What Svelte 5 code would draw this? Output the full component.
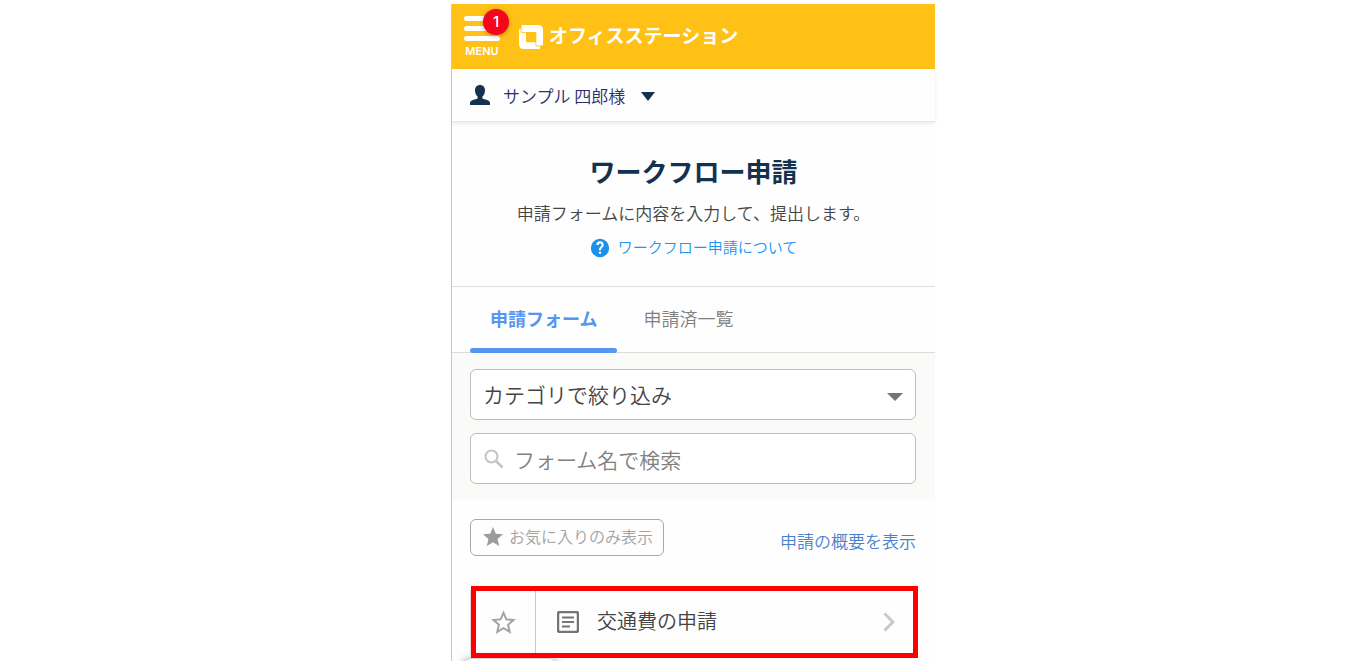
<script>
	let category = $state('');
	let keyword = $state('');
	let favoritesOnly = $state(false);
	let activeTab = $state('forms');

	const tabs = [
		{ id: 'forms', label: '申請フォーム' },
		{ id: 'applied', label: '申請済一覧' }
	];
	const forms = [{ id: 1, name: '交通費の申請' }];
</script>

<div class="page">
	<div class="panel">
		<header class="header">
			<button class="menu" type="button">
				<span class="bar"></span>
				<span class="bar"></span>
				<span class="bar"></span>
				<span class="menu-label">MENU</span>
				<span class="badge">1</span>
			</button>
			<a class="logo" href="#top">
				<svg width="26" height="26" viewBox="0 0 26 26" fill="#fff">
					<path d="M3.500 2Q3.500 1 4.500 1H20Q25 1 25 6V20.500Q25 21.500 24 21.500H18.300V8H3.500Z" />
					<path d="M1 6Q1 5 2 5H2.700V8.800H8V18.300H17.500V22.300H22V24Q22 25 21 25H6Q1 25 1 20Z" />
				</svg>
				<span>オフィスステーション</span>
			</a>
		</header>

		<div class="account">
			<button class="user" type="button">
				<svg width="20" height="20" viewBox="0 0 20 20" fill="#12324f">
					<path d="M10 0C6.900 0 5 2.100 5 5.200C5 8 6.100 10.300 7.600 11.500V13.300C6.800 14.600 0 14.700 0 18V20H20V18C20 14.700 13.200 14.600 12.400 13.300V11.500C13.900 10.300 15 8 15 5.200C15 2.100 13.100 0 10 0Z" />
				</svg>
				<span class="user-name">サンプル 四郎様</span>
				<svg class="user-caret" width="14" height="9" viewBox="0 0 14 9" fill="#12324f"><path d="M0 0H14L7 9Z" /></svg>
			</button>
		</div>

		<section class="intro">
			<h1>ワークフロー申請</h1>
			<p>申請フォームに内容を入力して、提出します。</p>
			<a class="help" href="#about">
				<svg width="20" height="20" viewBox="0 0 24 24" fill="#1e90e8"><path d="M12 1a11 11 0 1 0 0 22 11 11 0 0 0 0-22zm1.300 18h-2.600v-2.600h2.600V19zm2.300-8.500l-1 1.100c-.9.900-1.300 1.500-1.300 3.200h-2.600v-.6c0-1.300.5-2.300 1.300-3.100l1.300-1.400c.4-.4.6-.9.600-1.400a1.700 1.700 0 0 0-3.500 0H7.600a4.400 4.400 0 0 1 8.800 0c0 .8-.3 1.600-.8 2.200z" /></svg>
				<span>ワークフロー申請について</span>
			</a>
		</section>

		<div class="tabs" role="tablist">
			{#each tabs as tab (tab.id)}
				<button
					class="tab"
					class:active={activeTab === tab.id}
					type="button"
					role="tab"
					aria-selected={activeTab === tab.id}
					onclick={() => (activeTab = tab.id)}
				>{tab.label}</button>
			{/each}
		</div>

		<div class="filters">
			<div class="field">
				<select bind:value={category} aria-label="カテゴリで絞り込み">
					<option value="">カテゴリで絞り込み</option>
				</select>
				<svg class="select-caret" width="16" height="8" viewBox="0 0 16 8" fill="#757575"><path d="M0 0H16L8 8Z" /></svg>
			</div>
			<label class="field search">
				<svg width="20" height="20" viewBox="0 0 20 20" fill="none" stroke="#c4c4c4" stroke-width="2"><circle cx="7.500" cy="7.500" r="6" /><path stroke-width="2.500" d="M12 12L18.500 18.500" /></svg>
				<input type="text" bind:value={keyword} placeholder="フォーム名で検索" aria-label="フォーム名で検索" />
			</label>
		</div>

		<div class="tools">
			<button class="favorites" type="button" aria-pressed={favoritesOnly} onclick={() => (favoritesOnly = !favoritesOnly)}>
				<svg width="20" height="19" viewBox="2 2 20 19" fill="#9c9c9c"><path d="M12 17.270L18.180 21l-1.640-7.030L22 9.240l-7.190-.61L12 2 9.190 8.630 2 9.240l5.460 4.730L5.820 21z" /></svg>
				<span>お気に入りのみ表示</span>
			</button>
			<a class="summary" href="#summary">申請の概要を表示</a>
		</div>

		<ul class="forms">
			{#each forms as form (form.id)}
				<li class="form highlighted">
					<button class="star" type="button" aria-label="お気に入り">
						<svg width="25" height="24" viewBox="2 2 20 19" fill="#a3a3a3"><path d="M22 9.240l-7.190-.62L12 2 9.190 8.630 2 9.240l5.460 4.730L5.820 21 12 17.270 18.180 21l-1.630-7.030L22 9.240zM12 15.400l-3.760 2.270 1-4.280-3.320-2.880 4.380-.38L12 6.100l1.710 4.040 4.380.38-3.320 2.880 1 4.280L12 15.400z" /></svg>
					</button>
					<a class="form-link" href="#form">
						<svg width="22" height="22" viewBox="0 0 22 22" fill="none" stroke="#757575" stroke-width="2"><rect x="1" y="1" width="20" height="20" rx="2" stroke-width="2.500" /><path d="M5 6.500H17M5 11H17M5 15.500H13" /></svg>
						<span>{form.name}</span>
						<svg class="chevron" width="12" height="20" viewBox="0 0 12 20" fill="none" stroke="#c8c8c8" stroke-width="3"><path d="M1.500 1.500L10 10L1.500 18.500" /></svg>
					</a>
				</li>
			{/each}
		</ul>
		<div class="floating"></div>
	</div>
</div>

<style>
	:global(body) {
		background: #fff;
	}

	.page {
		height: 100vh;
		overflow: hidden;
		box-sizing: border-box;
		padding: 4px 0 0 16px;
		font-family: "Liberation Sans", "Noto Sans CJK JP", sans-serif;
		font-weight: 350;
		color: #444;
	}

	.page * {
		box-sizing: border-box;
	}

	.panel {
		position: relative;
		z-index: 0;
		max-width: 484px;
		height: 100%;
		margin: 0 auto;
		background: #fefefe;
		border-left: 1px solid #c8c8ca;
	}

	button,
	input,
	select {
		margin: 0;
		padding: 0;
		border: 0;
		background: none;
		font-family: "Noto Sans CJK JP", sans-serif;
		font-weight: inherit;
		color: inherit;
	}

	button {
		cursor: pointer;
	}

	a {
		text-decoration: none;
	}

	svg {
		flex: none;
		display: block;
	}

	.header {
		display: flex;
		align-items: center;
		gap: 18px;
		height: 65px;
		padding: 0 12px;
		background: #ffc116;
	}

	.menu {
		position: relative;
		display: flex;
		flex-direction: column;
		gap: 5px;
		width: 36px;
		color: #fff;
	}

	.bar {
		height: 5px;
		border-radius: 3px;
		background: #fff;
	}

	.menu-label {
		align-self: center;
		font-family: Inter, sans-serif;
		font-size: 11px;
		font-weight: 600;
		line-height: 11px;
	}

	.badge {
		position: absolute;
		top: -7px;
		left: 19px;
		width: 26px;
		height: 26px;
		border-radius: 50%;
		background: #f5061d;
		box-shadow: 0 1px 4px rgba(80, 40, 0, 0.4);
		font-family: Inter, sans-serif;
		font-size: 15px;
		font-weight: 500;
		line-height: 26px;
		text-align: center;
	}

	.logo {
		display: flex;
		align-items: center;
		gap: 5px;
		color: #fff;
		font-size: 19px;
		font-weight: bold;
		line-height: 24px;
	}

	.account {
		display: flex;
		height: 53px;
		padding: 0 18px;
		border-bottom: 1px solid #e6e6e6;
		box-shadow: 0 2px 4px rgba(0, 0, 0, 0.07);
	}

	.user {
		display: flex;
		align-items: center;
		gap: 13px;
		color: #2b2f6b;
		font-size: 17px;
		line-height: 24px;
	}

	.user-name {
		padding-top: 2px;
	}

	.user-caret {
		margin: 3px 0 0 3px;
	}

	.intro {
		display: flex;
		flex-direction: column;
		align-items: center;
		height: 165px;
		padding-top: 33px;
		border-bottom: 1px solid #dcdcdc;
	}

	h1 {
		margin: 0;
		color: #12324f;
		font-size: 26px;
		line-height: 36px;
	}

	p {
		margin: 12px 0 9px;
		font-size: 17px;
		line-height: 24px;
	}

	.help {
		display: flex;
		align-items: center;
		gap: 8px;
		color: #2196f3;
		font-size: 15px;
		line-height: 24px;
	}

	.tabs {
		display: flex;
		gap: 6px;
		height: 66px;
		padding: 0 18px;
		border-bottom: 1px solid #dcdcdc;
	}

	.tab {
		position: relative;
		padding: 0 20px 3px;
		color: #808080;
		font-size: 18px;
		line-height: 24px;
	}

	.tab.active {
		color: #5596f0;
		font-weight: bold;
	}

	.tab.active::after {
		content: '';
		position: absolute;
		right: 0;
		bottom: -1px;
		left: 0;
		height: 5px;
		border-radius: 3px;
		background: #5596f0;
	}

	.filters {
		display: flex;
		flex-direction: column;
		gap: 13px;
		padding: 16px 19px 16px 18px;
		background: #fafaf8;
	}

	.field {
		position: relative;
		display: flex;
		align-items: center;
		height: 51px;
		border: 1px solid #bdbdbd;
		border-radius: 6px;
		background: #fff;
		font-size: 21px;
	}

	select {
		appearance: none;
		width: 100%;
		height: 100%;
		padding: 0 40px 2px 12px;
		font-size: inherit;
	}

	.select-caret {
		position: absolute;
		top: 23px;
		right: 12px;
		pointer-events: none;
	}

	.search {
		gap: 10px;
		padding-left: 13px;
	}

	input {
		flex: 1;
		min-width: 0;
		height: 100%;
		font-size: inherit;
	}

	input::placeholder {
		color: #808080;
		opacity: 1;
	}

	.tools {
		display: flex;
		align-items: center;
		justify-content: space-between;
		padding: 19px 19px 30px 18px;
	}

	.favorites {
		display: flex;
		align-items: center;
		gap: 6px;
		height: 37px;
		padding: 0 10px 3px 12px;
		border: 1px solid #a8a8a8;
		border-radius: 6px;
		color: #a3a3a3;
		font-size: 16px;
		line-height: 24px;
	}

	.summary {
		padding-top: 10px;
		color: #4a80cc;
		font-size: 17px;
		line-height: 24px;
	}

	.forms {
		margin: 0;
		padding: 0 19px 0 18px;
		list-style: none;
	}

	.form {
		position: relative;
		display: flex;
		height: 72px;
		border: 1px solid #dcdcdc;
		border-radius: 6px;
	}

	.highlighted::after {
		content: '';
		position: absolute;
		inset: -1px -3px -1px 0;
		border: 5px solid #f00;
		pointer-events: none;
	}

	.star {
		display: flex;
		align-items: center;
		justify-content: center;
		width: 65px;
		border-right: 1px solid #c8c8c8;
	}

	.form-link {
		flex: 1;
		display: flex;
		align-items: center;
		gap: 18px;
		padding: 0 20px 0 21px;
		color: #444;
		font-size: 20px;
		line-height: 24px;
	}

	.chevron {
		margin-left: auto;
	}

	/* top edge of the floating box that rises from the bottom of the screen */
	.floating {
		position: absolute;
		bottom: -26px;
		left: 11px;
		width: 94px;
		height: 28px;
		border-radius: 8px;
		background: #fff;
		box-shadow: 0 0 8px rgba(0, 0, 0, 0.4);
		z-index: -1;
	}
</style>
